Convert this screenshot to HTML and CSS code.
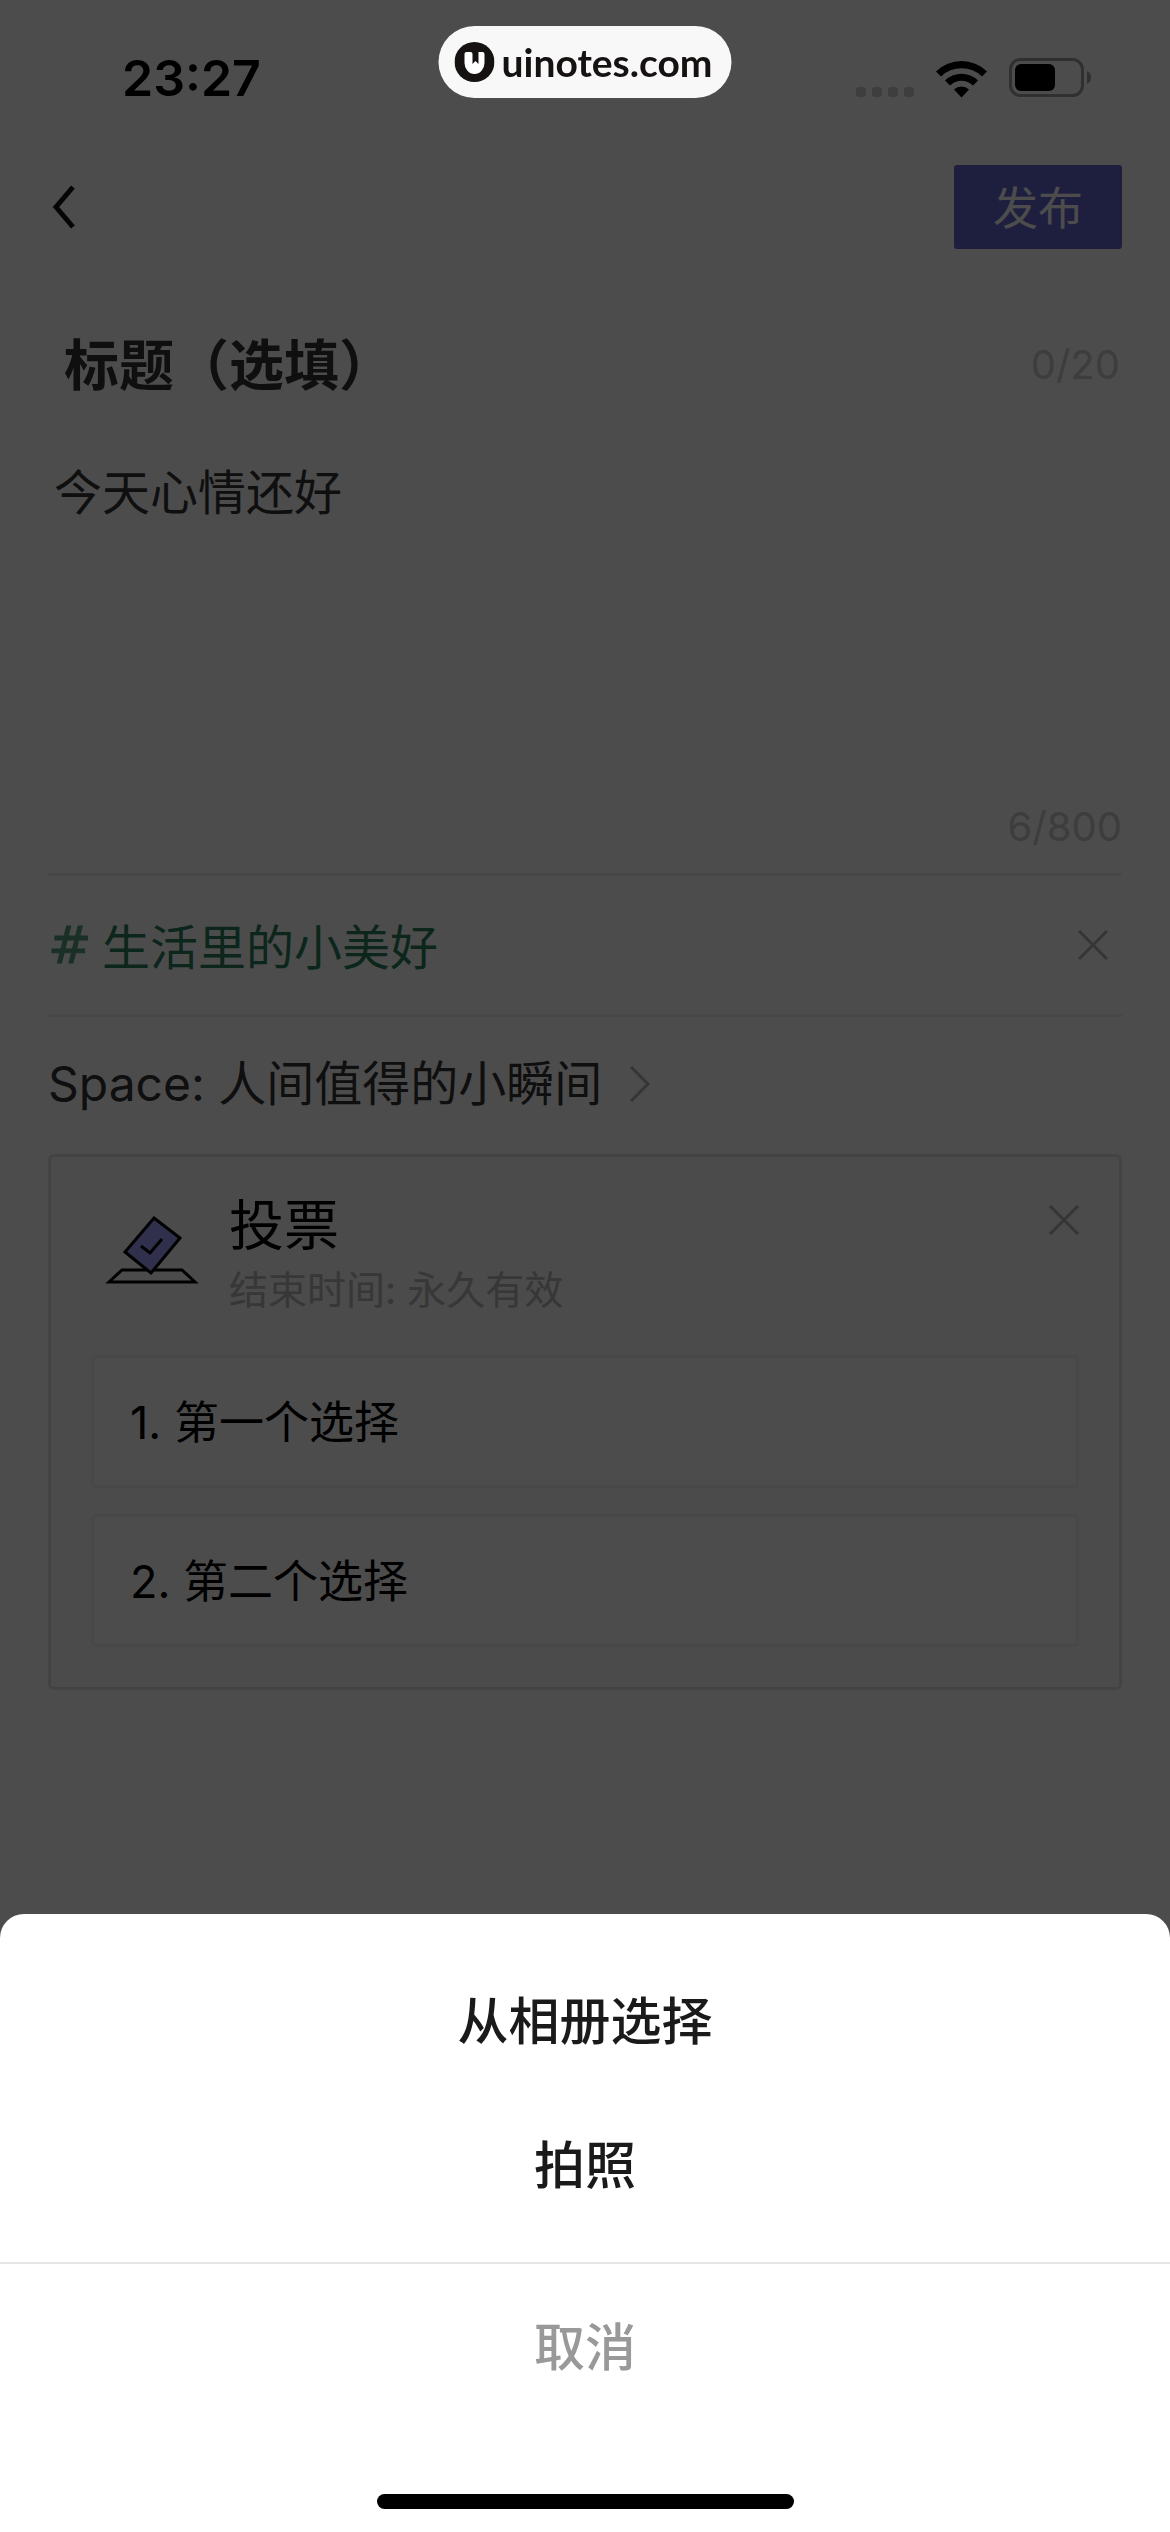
FILE: index.html
```html
<!DOCTYPE html>
<html lang="zh-CN">
<head>
<meta charset="utf-8">
<meta name="viewport" content="width=device-width, initial-scale=1">
<title>发布</title>
<link rel="stylesheet" href="styles.css">
</head>
<body>
<div class="screen">
  <header class="status">
    <time class="status-time">23:27</time>
    <div class="status-icons">
      <svg class="signal" viewBox="0 0 58 10" aria-hidden="true"><rect width="10" height="10" rx="3"/><rect x="16" width="10" height="10" rx="3"/><rect x="32" width="10" height="10" rx="3"/><rect x="48" width="10" height="10" rx="3"/></svg>
      <svg class="wifi" viewBox="0 0 51 38" aria-hidden="true"><path d="M0 11.500A36.500 36.500 0 0 1 51 11.500L46 16.500A29.500 29.500 0 0 0 5 16.500ZM9 20.500A23.800 23.800 0 0 1 42 20.500L37 25.500A16.500 16.500 0 0 0 14 25.500ZM18 29.500A11 11 0 0 1 33 29.500L25.500 37.500Z"/></svg>
      <svg class="battery" viewBox="0 0 83 40" aria-hidden="true"><rect class="battery-case" x="1.500" y="1.500" width="72" height="36" rx="10"/><rect x="6" y="6" width="40" height="27" rx="6"/><path class="battery-tip" d="M78 13Q82 15 82 19.500T78 26Z"/></svg>
    </div>
  </header>

  <nav class="toolbar">
    <button class="icon-button" aria-label="返回"><svg class="back" viewBox="0 0 24 44" aria-hidden="true"><path d="M21 2L4 22L21 42"/></svg></button>
    <button class="publish">发布</button>
  </nav>

  <main class="editor">
    <div class="title-row">
      <input class="title-input" type="text" placeholder="标题（选填）" aria-label="标题">
      <span class="count">0/20</span>
    </div>
    <textarea class="body-input" aria-label="正文">今天心情还好</textarea>
    <div class="count count-body">6/800</div>

    <div class="topic">
      <span class="hash">#</span>
      <span class="topic-name">生活里的小美好</span>
      <button class="icon-button" aria-label="移除话题"><svg class="cross" viewBox="0 0 30 30" aria-hidden="true"><path d="M1 1L29 29M29 1L1 29"/></svg></button>
    </div>

    <a class="space" href="#space">
      <span class="space-name">Space: 人间值得的小瞬间</span>
      <svg class="next" viewBox="0 0 20 36" aria-hidden="true"><path d="M1 1L18 18L1 35"/></svg>
    </a>

    <section class="vote">
      <div class="vote-head">
        <svg class="vote-icon" viewBox="0 0 94 68" aria-hidden="true"><path d="M17 54H77L90 66H4Z"/><path class="ballot" d="M49 2L75 22L46 57L20 36Z"/><path d="M36 30L45 37L57 23"/></svg>
        <div class="vote-text">
          <h2 class="vote-title">投票</h2>
          <p class="vote-end">结束时间: 永久有效</p>
        </div>
        <button class="icon-button vote-close" aria-label="移除投票"><svg class="cross" viewBox="0 0 30 30" aria-hidden="true"><path d="M1 1L29 29M29 1L1 29"/></svg></button>
      </div>
      <ul class="options">
        <li class="option">1. 第一个选择</li>
        <li class="option">2. 第二个选择</li>
      </ul>
    </section>
  </main>
</div>

<div class="backdrop">
  <div class="sheet" role="dialog" aria-label="选择图片">
    <div class="sheet-actions">
      <button class="sheet-item">从相册选择</button>
      <button class="sheet-item">拍照</button>
    </div>
    <button class="sheet-item sheet-cancel">取消</button>
    <div class="home-bar"></div>
  </div>
</div>

<div class="badge">
  <svg class="badge-logo" viewBox="0 0 40 40" aria-hidden="true"><circle cx="20" cy="20" r="20"/><path class="badge-mark" d="M12 10H16Q18 10 18 12V22L21 19L24 22V10H28Q30 10 30 12V21A10 11 0 0 1 10 21V12Q10 10 12 10Z"/></svg>
  <span>uinotes.com</span>
</div>
</body>
</html>
```

FILE: styles.css
```css
* {
  box-sizing: border-box;
}

body {
  margin: 0;
  background: #fff;
  color: #000;
  font-family: Inter, "Noto Sans CJK SC", sans-serif;
}

button,
input,
textarea {
  margin: 0;
  padding: 0;
  border: 0;
  background: none;
  color: inherit;
  font: inherit;
}

svg {
  display: block;
  flex: none;
}

h2,
p,
ul {
  margin: 0;
  padding: 0;
}

.screen {
  min-height: 100vh;
}

.status {
  display: flex;
  justify-content: space-between;
  align-items: center;
  height: 156px;
  padding: 0 78px 0 122px;
}

.status-time {
  font-size: 50px;
  font-weight: 600;
}

.status-icons {
  display: flex;
  align-items: flex-end;
  gap: 22px;
}

.signal {
  width: 58px;
  height: 12px;
  fill: #d0d0d0;
}

.wifi {
  width: 51px;
  height: 38px;
}

.battery {
  width: 83px;
  height: 40px;
}

.battery-case {
  fill: none;
  stroke: #a0a0a0;
  stroke-width: 3;
}

.battery-tip {
  fill: #a0a0a0;
}

.toolbar {
  display: flex;
  justify-content: space-between;
  align-items: center;
  padding: 9px 48px 0 52px;
}

.icon-button {
  flex: none;
}

.back {
  width: 24px;
  height: 44px;
  fill: none;
  stroke: #111;
  stroke-width: 5;
}

.publish {
  width: 168px;
  height: 84px;
  padding-bottom: 4px;
  border-radius: 3px;
  background: #6666d4;
  color: #fff;
  font-size: 45px;
}

.editor {
  padding: 66px 48px 0;
}

.title-row {
  display: flex;
  align-items: center;
  height: 100px;
  padding: 0 2px 0 16px;
}

.title-input {
  flex: 1;
  min-width: 0;
  height: 84px;
  font-size: 55px;
  font-weight: 700;
}

.title-input::placeholder {
  color: #333;
  opacity: 1;
}

.count {
  color: #ccc;
  font-size: 40px;
  line-height: 48px;
}

.body-input {
  display: block;
  width: 100%;
  height: 344px;
  padding: 42px 6px 0;
  resize: none;
  color: #333;
  font-size: 48px;
  line-height: 72px;
}

.count-body {
  height: 114px;
  padding-top: 44px;
  text-align: right;
}

.topic {
  display: flex;
  align-items: center;
  height: 144px;
  padding-right: 14px;
  border: solid #efefef;
  border-width: 3px 0;
  color: #2b7f5a;
  font-size: 48px;
}

.hash {
  width: 54px;
  color: #57a080;
  font-family: "DejaVu Sans", sans-serif;
  font-size: 52px;
  -webkit-text-stroke: 1px #57a080;
}

.topic-name {
  flex: 1;
  padding-bottom: 2px;
}

.cross {
  width: 30px;
  height: 30px;
  fill: none;
  stroke: #b3b3b3;
  stroke-width: 3;
}

.space {
  display: flex;
  align-items: center;
  height: 137px;
  padding-bottom: 4px;
  color: #333;
  font-size: 48px;
  text-decoration: none;
}

.space-name {
  padding-bottom: 8px;
}

.next {
  width: 20px;
  height: 36px;
  margin-left: 28px;
  fill: none;
  stroke: #b3b3b3;
  stroke-width: 3;
}

.vote {
  padding: 36px 40px 40px;
  border: 3px solid #e2e2e8;
  border-radius: 6px;
  background: #fafafa;
}

.vote-head {
  display: flex;
  align-items: flex-start;
  height: 162px;
  padding-left: 14px;
}

.vote-icon {
  width: 94px;
  height: 68px;
  margin: 23px 30px 0 0;
  fill: none;
  stroke: #000;
  stroke-width: 3;
}

.ballot {
  fill: #a2a0ff;
}

.vote-text {
  flex: 1;
}

.vote-title {
  font-size: 55px;
  font-weight: 400;
  line-height: 64px;
}

.vote-end {
  color: #b8b8b8;
  font-size: 39px;
  line-height: 66px;
}

.vote-close {
  margin-top: 12px;
}

.options {
  display: grid;
  gap: 26px;
  list-style: none;
}

.option {
  display: flex;
  align-items: center;
  height: 133px;
  padding: 0 36px 4px;
  border: 3px solid #f1f1f1;
  border-radius: 6px;
  background: #fff;
  font-size: 45px;
}

.backdrop {
  position: fixed;
  inset: 0;
  display: flex;
  flex-direction: column;
  justify-content: flex-end;
  background: rgba(0, 0, 0, 0.7);
}

.sheet {
  padding-bottom: 23px;
  border-radius: 24px 24px 0 0;
  background: #fff;
  color: #1a1a1a;
}

.sheet-actions {
  display: grid;
  padding: 36px 0 24px;
  border-bottom: 2px solid #e5e5e5;
}

.sheet-item {
  display: block;
  width: 100%;
  height: 144px;
  padding-bottom: 8px;
  font-size: 51px;
  font-weight: 500;
}

.sheet-cancel {
  height: 168px;
  color: #999;
}

.home-bar {
  width: 417px;
  height: 15px;
  margin: 62px auto 0;
  border-radius: 8px;
  background: #000;
}

.badge {
  position: fixed;
  top: 26px;
  left: 50%;
  display: flex;
  align-items: center;
  gap: 7px;
  height: 72px;
  padding: 0 19px 0 16px;
  border-radius: 36px;
  background: #f8f8f8;
  color: #161212;
  font-family: Lato, sans-serif;
  font-size: 39px;
  font-weight: 700;
  line-height: 44px;
  transform: translateX(-50%);
}

.badge-logo {
  width: 40px;
  height: 40px;
  fill: #161212;
}

.badge-mark {
  fill: #fff;
}
```
